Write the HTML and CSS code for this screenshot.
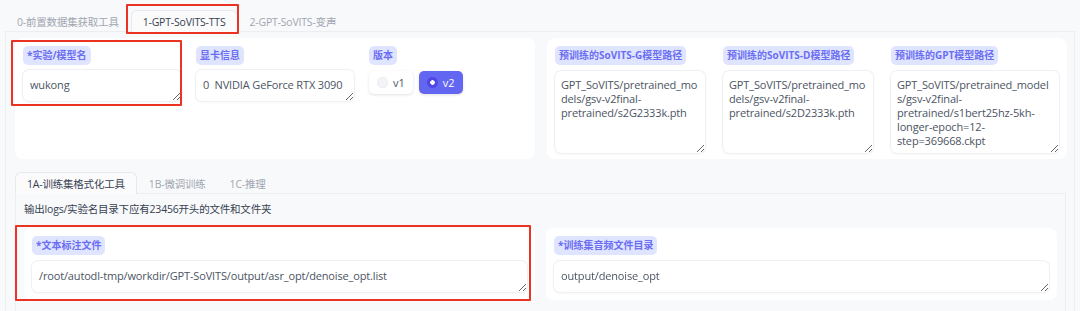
FILE: index.html
```html
<!DOCTYPE html>
<html lang="zh">
<head>
  <meta charset="UTF-8">
  <meta name="viewport" content="width=device-width, initial-scale=1.0">
  <title>GPT-SoVITS WebUI</title>
  <link rel="stylesheet" href="styles.css">
</head>
<body>
  <div class="app">
    <div class="tab-nav">
      <button class="tab">0-前置数据集获取工具</button>
      <button class="tab selected annot-tab">1-GPT-SoVITS-TTS</button>
      <button class="tab">2-GPT-SoVITS-变声</button>
    </div>

    <div class="tab-panel">
      <div class="row-top">
        <div class="card cols-left">
          <div class="field annot-name">
            <span class="label">*实验/模型名</span>
            <textarea class="box line" rows="1">wukong</textarea>
          </div>
          <div class="field">
            <span class="label">显卡信息</span>
            <textarea class="box line" rows="1">0  NVIDIA GeForce RTX 3090</textarea>
          </div>
          <div class="field">
            <span class="label">版本</span>
            <div class="radios">
              <label class="radio"><span class="dot"></span>v1</label>
              <label class="radio checked"><span class="dot"></span>v2</label>
            </div>
          </div>
        </div>

        <div class="card cols-right">
          <div class="field">
            <span class="label">预训练的SoVITS-G模型路径</span>
            <textarea class="box tall">GPT_SoVITS/pretrained_models/gsv-v2final-pretrained/s2G2333k.pth</textarea>
          </div>
          <div class="field">
            <span class="label">预训练的SoVITS-D模型路径</span>
            <textarea class="box tall">GPT_SoVITS/pretrained_models/gsv-v2final-pretrained/s2D2333k.pth</textarea>
          </div>
          <div class="field">
            <span class="label">预训练的GPT模型路径</span>
            <textarea class="box tall">GPT_SoVITS/pretrained_models/gsv-v2final-pretrained/s1bert25hz-5kh-longer-epoch=12-step=369668.ckpt</textarea>
          </div>
        </div>
      </div>

      <div class="inner">
        <div class="tab-nav small">
          <button class="tab selected">1A-训练集格式化工具</button>
          <button class="tab">1B-微调训练</button>
          <button class="tab">1C-推理</button>
        </div>
        <div class="inner-panel">
          <p class="hint">输出logs/实验名目录下应有23456开头的文件和文件夹</p>
          <div class="row-bottom">
            <div class="card annot-file">
              <span class="label">*文本标注文件</span>
              <textarea class="box line" rows="1">/root/autodl-tmp/workdir/GPT-SoVITS/output/asr_opt/denoise_opt.list</textarea>
            </div>
            <div class="card">
              <span class="label">*训练集音频文件目录</span>
              <textarea class="box line" rows="1">output/denoise_opt</textarea>
            </div>
          </div>
        </div>
      </div>
    </div>
  </div>
</body>
</html>
```

FILE: styles.css
```css
body {
  margin: 0;
  background: #f8f9fb;
  font-family: "Open Sans", "Noto Sans CJK SC", sans-serif;
  font-size: 11px;
  color: #4b5563;
}
.app {
  height: 311px;
  overflow: hidden;
  padding: 0 5px;
}
.tab-nav {
  display: flex;
  padding-top: 10px;
  height: 21px;
}
.tab {
  position: relative;
  font-family: inherit;
  font-size: 10.5px;
  letter-spacing: -0.2px;
  color: #a0a6b1;
  background: none;
  border: 1px solid transparent;
  border-bottom: none;
  border-radius: 6px 6px 0 0;
  padding: 0 11px;
  height: 22px;
  line-height: 20px;
  cursor: pointer;
}
.tab.selected {
  color: #374151;
  background: #fbfbfc;
  border-color: #e6e8ec;
  z-index: 1;
}
.tab-panel {
  border: 1px solid #eceef1;
  border-bottom: none;
  padding: 6px 7px 0 9px;
  height: 273px;
}
.row-top {
  display: flex;
  gap: 12px;
}
.card {
  position: relative;
  background: #fff;
  border-radius: 8px;
  padding: 8px;
}
.cols-left, .cols-right {
  width: 504px;
  display: grid;
  align-items: start;
}
.cols-left {
  grid-template-columns: repeat(3, 1fr);
  gap: 15px;
}
.cols-right {
  grid-template-columns: 150px 150px 1fr;
  gap: 18px;
  padding-bottom: 6px;
}
.field {
  position: relative;
  display: flex;
  flex-direction: column;
  align-items: flex-start;
}
.label {
  display: inline-block;
  height: 19px;
  line-height: 19px;
  padding: 0 4px;
  border-radius: 5px;
  background: #e0e5ff;
  color: #6b6ef2;
  font-weight: 700;
  font-size: 10px;
  white-space: nowrap;
}
.box {
  display: block;
  box-sizing: border-box;
  width: 100%;
  margin-top: 5px;
  height: 31px;
  padding: 7px;
  font-family: inherit;
  font-size: 11px;
  letter-spacing: -0.15px;
  line-height: 15px;
  color: #4b5563;
  background: #fff;
  border: none;
  border-radius: 6px;
  box-shadow: 0 0 0 1px #eef0f3, 0 1px 3px rgba(0, 0, 0, 0.06);
  resize: vertical;
  outline: none;
}
.box.line {
  white-space: pre;
  overflow: hidden;
}
.box.tall {
  margin-top: 6px;
  height: 82px;
  line-height: 14px;
  padding: 7px 6px;
}
.radios {
  display: flex;
  gap: 6px;
  margin-top: 6px;
}
.radio {
  display: flex;
  align-items: center;
  gap: 5px;
  height: 23px;
  padding: 0 8px;
  border-radius: 5px;
  background: #fff;
  box-shadow: 0 1px 3px rgba(0, 0, 0, 0.12);
  color: #4b5563;
}
.dot {
  width: 11px;
  height: 11px;
  border-radius: 50%;
  background: #f3f4f6;
  box-shadow: inset 0 0 0 1px #eceef2;
}
.radio.checked {
  background: #6366f1;
  color: #fff;
}
.radio.checked .dot {
  background: radial-gradient(circle, #fff 0 2px, #4f46e5 2.5px);
  box-shadow: none;
}
.inner {
  margin-top: 13px;
  margin-right: 1px;
}
.tab-nav.small {
  padding-top: 0;
}
.inner-panel {
  border: 1px solid #eceef1;
  border-bottom: none;
  padding: 0 8px;
  height: 118px;
}
.hint {
  margin: 8px 0 0;
  font-size: 10.5px;
  letter-spacing: -0.2px;
  line-height: 15px;
  color: #374151;
}
.row-bottom {
  display: grid;
  grid-template-columns: 1fr 1fr;
  gap: 11px;
  margin-top: 11px;
}
.row-bottom .box {
  margin-top: 6px;
}
.annot-tab::after, .annot-name::after, .annot-file::after {
  content: "";
  position: absolute;
  border: 2px solid #ea3323;
  border-radius: 1px;
  pointer-events: none;
}
.annot-tab::after {
  inset: -7px -2px -2px -6px;
}
.annot-name::after {
  inset: -6px -1px -5px -12px;
}
.annot-file::after {
  inset: -3px 4px -1px -9px;
}
```
